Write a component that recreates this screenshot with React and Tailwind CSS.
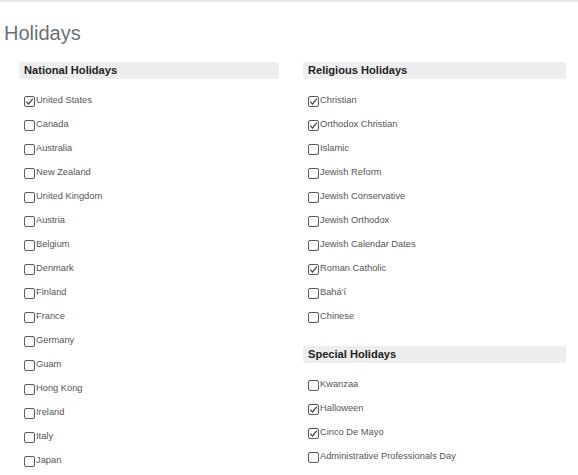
import React from "react";

const national = [
  ["United States", true],
  ["Canada", false],
  ["Australia", false],
  ["New Zealand", false],
  ["United Kingdom", false],
  ["Austria", false],
  ["Belgium", false],
  ["Denmark", false],
  ["Finland", false],
  ["France", false],
  ["Germany", false],
  ["Guam", false],
  ["Hong Kong", false],
  ["Ireland", false],
  ["Italy", false],
  ["Japan", false],
];

const religious = [
  ["Christian", true],
  ["Orthodox Christian", true],
  ["Islamic", false],
  ["Jewish Reform", false],
  ["Jewish Conservative", false],
  ["Jewish Orthodox", false],
  ["Jewish Calendar Dates", false],
  ["Roman Catholic", true],
  ["Bahá'í", false],
  ["Chinese", false],
];

const special = [
  ["Kwanzaa", false],
  ["Halloween", true],
  ["Cinco De Mayo", true],
  ["Administrative Professionals Day", false],
];

function Box({ checked }) {
  return (
    <span className="w-[11px] h-[11px] border border-[#5a5a5a] rounded-[2px] bg-white flex items-center justify-center shrink-0">
      {checked && (
        <svg width="9" height="9" viewBox="0 0 9 9">
          <path d="M1.2 4.6 L3.5 7 L7.9 1.6" fill="none" stroke="#444" strokeWidth="1.2" />
        </svg>
      )}
    </span>
  );
}

function Row({ label, checked }) {
  return (
    <div className="h-[24px] flex items-center gap-[1px] pl-[5px] text-[9.3px] text-[#555]">
      <Box checked={checked} />
      <span>{label}</span>
    </div>
  );
}

function Header({ children }) {
  return (
    <div className="h-[17px] bg-[#eeeeee] rounded-[2px] flex items-center pl-[5px] text-[11.1px] font-bold text-[#222]">
      {children}
    </div>
  );
}

export default function App() {
  return (
    <div className="w-[578px] h-[475px] bg-white overflow-hidden" style={{ fontFamily: '"Liberation Sans", Arial, sans-serif' }}>
      <div className="h-[2px] bg-[#e6e6e6]" />
      <div className="pl-[4px] pt-[19px] text-[20px] leading-[24px] text-[#6a7178]">Holidays</div>
      <div className="flex gap-[24px] pl-[19px] pt-[17px]">
        <div className="w-[260px]">
          <Header>National Holidays</Header>
          <div className="pt-[10px]">
            {national.map(([l, c]) => (
              <Row key={l} label={l} checked={c} />
            ))}
          </div>
        </div>
        <div className="w-[263px]">
          <Header>Religious Holidays</Header>
          <div className="pt-[10px]">
            {religious.map(([l, c]) => (
              <Row key={l} label={l} checked={c} />
            ))}
          </div>
          <div className="pt-[17px]">
            <Header>Special Holidays</Header>
            <div className="pt-[10px]">
              {special.map(([l, c]) => (
                <Row key={l} label={l} checked={c} />
              ))}
            </div>
          </div>
        </div>
      </div>
    </div>
  );
}
